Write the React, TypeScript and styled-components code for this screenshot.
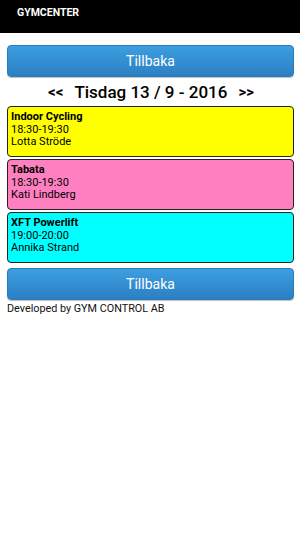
import React from 'react';
import styled, { createGlobalStyle } from 'styled-components';

const GlobalStyle = createGlobalStyle`
	html, body {
		margin: 0;
		padding: 0;
		background: #fff;
		font-family: Roboto, "Liberation Sans", sans-serif;
	}
`;

const Page = styled('div')`
	width: 300px;
	min-height: 533px;
	background: #fff;
	display: flex;
	flex-direction: column;
`;

const Header = styled('div')`
	background: #000;
	height: 33px;
	display: flex;
	align-items: flex-start;
	padding: 6px 0 0 17px;
	box-sizing: border-box;
	color: #fff;
	font-size: 10.5px;
	font-weight: bold;
`;

const Content = styled('div')`
	display: flex;
	flex-direction: column;
	padding: 12px 6px 0 7px;
`;

const BackButton = styled('button')`
	height: 32px;
	border: 1px solid #2b7cba;
	border-radius: 4px;
	background: linear-gradient(#3c9ee0, #2b80c3);
	color: #fff;
	font-family: Roboto, "Liberation Sans", sans-serif;
	font-size: 14px;
	box-shadow: 0 1px 1px rgba(0,0,0,0.25);
	padding: 0;
`;

const DateRow = styled('div')`
	display: flex;
	justify-content: center;
	align-items: center;
	gap: 11px;
	height: 29px;
	font-size: 17px;
	color: #000;
	padding-left: 1px;
`;

const Arrow = styled('span')`
	font-weight: bold;
	font-size: 15px;
`;

const DateText = styled('span')`
	font-weight: 500;
`;

const CardList = styled('div')`
	display: flex;
	flex-direction: column;
	gap: 2px;
	margin-bottom: 5px;
`;

const Card = styled('div')<{ $bg: string }>`
	background: ${props => props.$bg};
	border: 1px solid #222;
	border-radius: 4px;
	height: 51px;
	box-sizing: border-box;
	padding: 4px 0 0 3px;
	font-size: 11px;
	line-height: 12.5px;
	color: #000;
`;

const Title = styled('div')`
	font-weight: bold;
`;

const Footer = styled('div')`
	font-size: 10.8px;
	color: #111;
	padding-top: 2px;
`;

const sessions = [
	{ name: 'Indoor Cycling', time: '18:30-19:30', coach: 'Lotta Ströde', color: '#ffff00' },
	{ name: 'Tabata', time: '18:30-19:30', coach: 'Kati Lindberg', color: '#ff80c0' },
	{ name: 'XFT Powerlift', time: '19:00-20:00', coach: 'Annika Strand', color: '#00ffff' },
];

export default function App() {
	return (
		<Page>
			<GlobalStyle />
			<Header>GYMCENTER</Header>
			<Content>
				<BackButton>Tillbaka</BackButton>
				<DateRow>
					<Arrow>&lt;&lt;</Arrow>
					<DateText>Tisdag 13 / 9 - 2016</DateText>
					<Arrow>&gt;&gt;</Arrow>
				</DateRow>
				<CardList>
					{sessions.map(s => (
						<Card key={s.name} $bg={s.color}>
							<Title>{s.name}</Title>
							<div>{s.time}</div>
							<div>{s.coach}</div>
						</Card>
					))}
				</CardList>
				<BackButton>Tillbaka</BackButton>
				<Footer>Developed by GYM CONTROL AB</Footer>
			</Content>
		</Page>
	);
}
